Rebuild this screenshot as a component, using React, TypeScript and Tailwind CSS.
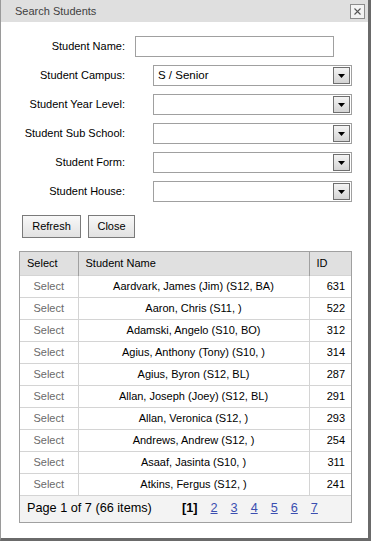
import React from 'react';

const rows: [string, number][] = [
  ['Aardvark, James (Jim) (S12, BA)', 631],
  ['Aaron, Chris (S11, )', 522],
  ['Adamski, Angelo (S10, BO)', 312],
  ['Agius, Anthony (Tony) (S10, )', 314],
  ['Agius, Byron (S12, BL)', 287],
  ['Allan, Joseph (Joey) (S12, BL)', 291],
  ['Allan, Veronica (S12, )', 293],
  ['Andrews, Andrew (S12, )', 254],
  ['Asaaf, Jasinta (S10, )', 311],
  ['Atkins, Fergus (S12, )', 241],
];

function Combo({ value }: { value?: string }) {
  return (
    <div className="flex h-[21px] w-[199px] items-center border border-[#a0a0a0] bg-white pl-[4px] pr-[1px]">
      <span className="flex-1 truncate text-[11.5px] text-black">{value}</span>
      <span className="flex h-[17px] w-[17px] items-center justify-center border border-[#6f6f6f] bg-gradient-to-b from-[#f4f4f4] to-[#d4d4d4]">
        <svg width="7" height="4" viewBox="0 0 7 4">
          <path d="M0 0h7L3.5 4z" fill="#000" />
        </svg>
      </span>
    </div>
  );
}

function Field({ label, children }: { label: string; children: React.ReactNode }) {
  return (
    <div className="flex h-[29px] items-center">
      <label className="w-[116px] text-right text-[11px] text-black">{label}</label>
      <div className="flex flex-1 justify-end">{children}</div>
    </div>
  );
}

export default function App() {
  return (
    <div
      className="flex h-[541px] w-[371px] flex-col border-l border-l-[#9a9a9a] border-r-[3px] border-r-[#6a6a6a] border-b-[3px] border-b-[#6a6a6a] bg-white"
      style={{ fontFamily: '"Liberation Sans", Arial, sans-serif' }}
    >
      <div className="flex h-[22px] items-center justify-between bg-[#dfdfdf] pl-[14px] pr-[3px]">
        <span className="text-[11px] text-[#3f3f3f]">Search Students</span>
        <span className="flex h-[15px] w-[15px] items-center justify-center border border-[#8c8c8c] bg-[#f3f3f3]">
          <svg width="7" height="7" viewBox="0 0 7 7">
            <path d="M0.5 0.5l6 6M6.5 0.5l-6 6" stroke="#555" strokeWidth="1.1" />
          </svg>
        </span>
      </div>

      <div className="flex flex-col pl-[8px] pr-[16px] pt-[10px]">
        <div className="flex h-[29px] items-center">
          <label className="w-[116px] text-right text-[11px] text-black">Student Name:</label>
          <input className="ml-[10px] h-[21px] w-[199px] border border-[#a0a0a0] bg-white outline-none" />
        </div>
        <Field label="Student Campus:">
          <Combo value="S / Senior" />
        </Field>
        <Field label="Student Year Level:">
          <Combo />
        </Field>
        <Field label="Student Sub School:">
          <Combo />
        </Field>
        <Field label="Student Form:">
          <Combo />
        </Field>
        <Field label="Student House:">
          <Combo />
        </Field>
      </div>

      <div className="flex gap-[7px] pl-[21px] pt-[9px]">
        <button className="h-[23px] w-[59px] border border-[#7a7a7a] bg-gradient-to-b from-[#f8f8f8] to-[#e2e2e2] text-[11px] text-black">
          Refresh
        </button>
        <button className="h-[23px] w-[47px] border border-[#7a7a7a] bg-gradient-to-b from-[#f8f8f8] to-[#e2e2e2] text-[11px] text-black">
          Close
        </button>
      </div>

      <div className="ml-[18px] mt-[13px] w-[333px] border border-[#a0a0a0]">
        <table className="w-full border-collapse text-[11px]">
          <thead>
            <tr className="h-[23px] bg-[#e0e0e0] text-left text-black">
              <th className="w-[58px] border-r border-[#a0a0a0] pl-[7px] font-normal">Select</th>
              <th className="border-r border-[#a0a0a0] pl-[7px] font-normal">Student Name</th>
              <th className="w-[42px] pl-[7px] font-normal">ID</th>
            </tr>
          </thead>
          <tbody>
            {rows.map(([name, id]) => (
              <tr key={id} className="h-[22px] border-t border-[#d4d4d4]">
                <td className="border-r border-[#d4d4d4] text-center text-[#6a6a6a]">Select</td>
                <td className="border-r border-[#d4d4d4] text-center text-black">{name}</td>
                <td className="pr-[6px] text-right text-black">{id}</td>
              </tr>
            ))}
          </tbody>
        </table>
        <div className="flex h-[27px] items-center border-t border-[#d4d4d4] bg-[#f3f3f3] pl-[7px] text-[12.7px] text-black">
          <span className="w-[155px]">Page 1 of 7 (66 items)</span>
          <span className="font-bold">[1]</span>
          {[2, 3, 4, 5, 6, 7].map((p) => (
            <span key={p} className="ml-[13px] text-[#3a4eb0] underline">
              {p}
            </span>
          ))}
        </div>
      </div>
    </div>
  );
}
